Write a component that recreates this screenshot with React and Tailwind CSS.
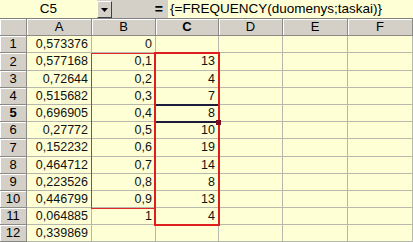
const cols = ["A", "B", "C", "D", "E", "F"];
const colW = ["w-[65px]", "w-[64px]", "w-[63px]", "w-[64px]", "w-[65px]", "w-[65px]"];

const rows = [
  { h: "h-[17px]", a: "0,573376", b: "0", c: "" },
  { h: "h-[18px]", a: "0,577168", b: "0,1", c: "13" },
  { h: "h-[17px]", a: "0,72644", b: "0,2", c: "4" },
  { h: "h-[17px]", a: "0,515682", b: "0,3", c: "7" },
  { h: "h-[17px]", a: "0,696905", b: "0,4", c: "8" },
  { h: "h-[17px]", a: "0,27772", b: "0,5", c: "10" },
  { h: "h-[18px]", a: "0,152232", b: "0,6", c: "19" },
  { h: "h-[17px]", a: "0,464712", b: "0,7", c: "14" },
  { h: "h-[17px]", a: "0,223526", b: "0,8", c: "8" },
  { h: "h-[17px]", a: "0,446799", b: "0,9", c: "13" },
  { h: "h-[17px]", a: "0,064885", b: "1", c: "4" },
  { h: "h-[17px]", a: "0,339869", b: "", c: "" },
];

const font = { fontFamily: '"Liberation Sans", Arial, sans-serif' };

const HeaderCell = ({ className, bold, children }) => (
  <div
    className={`${className} h-full flex items-center justify-center bg-[#d4d0c8] border-r border-b border-[#8c8a84] shadow-[inset_1px_1px_0_#ffffff] text-[13px] text-black ${bold ? "font-bold" : ""}`}
  >
    {children}
  </div>
);

const Cell = ({ className, children }) => (
  <div
    className={`${className} h-full flex items-center justify-end pr-[3px] bg-[#ffffd6] border-r border-b border-[#b9b8ae] text-[12.5px] text-[#111]`}
  >
    {children}
  </div>
);

export default function App() {
  return (
    <div className="w-[413px] h-[242px] overflow-hidden bg-[#d4d0c8]" style={font}>
      {/* formula bar */}
      <div className="flex h-[19px] border-b border-[#808080]">
        <div className="w-[97px] h-full flex items-center justify-center bg-[#ffffd6] text-[13.5px] text-black">
          C5
        </div>
        <div className="w-[15px] h-[17px] mt-[1px] flex items-center justify-center bg-[#d4d0c8] border border-t-white border-l-white border-r-[#404040] border-b-[#404040]">
          <svg width="7" height="4" viewBox="0 0 7 4">
            <path d="M0 0h7L3.5 4z" fill="#000" />
          </svg>
        </div>
        <div className="w-[56px] h-full flex items-center justify-end pr-[5px] text-[14px] font-bold text-black">
          =
        </div>
        <div className="flex-1 h-full flex items-center pl-[2px] bg-[#ffffd6] text-[13.5px] text-black whitespace-nowrap">
          {"{=FREQUENCY(duomenys;taskai)}"}
        </div>
      </div>

      {/* sheet */}
      <div className="relative">
        <div className="flex h-[17px]">
          <HeaderCell className="w-[27px]" />
          {cols.map((c, i) => (
            <HeaderCell key={c} className={colW[i]} bold={c === "C"}>
              {c}
            </HeaderCell>
          ))}
        </div>
        {rows.map((r, i) => (
          <div key={i} className={`flex ${r.h}`}>
            <HeaderCell className="w-[27px]" bold={i === 4}>
              {i + 1}
            </HeaderCell>
            <Cell className={colW[0]}>{r.a}</Cell>
            <Cell className={colW[1]}>{r.b}</Cell>
            <Cell className={colW[2]}>{r.c}</Cell>
            <Cell className={colW[3]} />
            <Cell className={colW[4]} />
            <Cell className={colW[5]} />
          </div>
        ))}

        {/* range outlines */}
        <div className="absolute left-[91px] top-[34px] w-[65px] h-[156px] border border-[#e02a2a]" />
        <div className="absolute left-[154px] top-[85px] w-[66px] h-[19px] border-y-2 border-[#1c1c3a]" />
        <div className="absolute left-[154px] top-[33px] w-[66px] h-[174px] border-2 border-[#e01e1e]" />
        <div className="absolute left-[216px] top-[101px] w-[5px] h-[5px] bg-[#7a1020]" />
      </div>
    </div>
  );
}
